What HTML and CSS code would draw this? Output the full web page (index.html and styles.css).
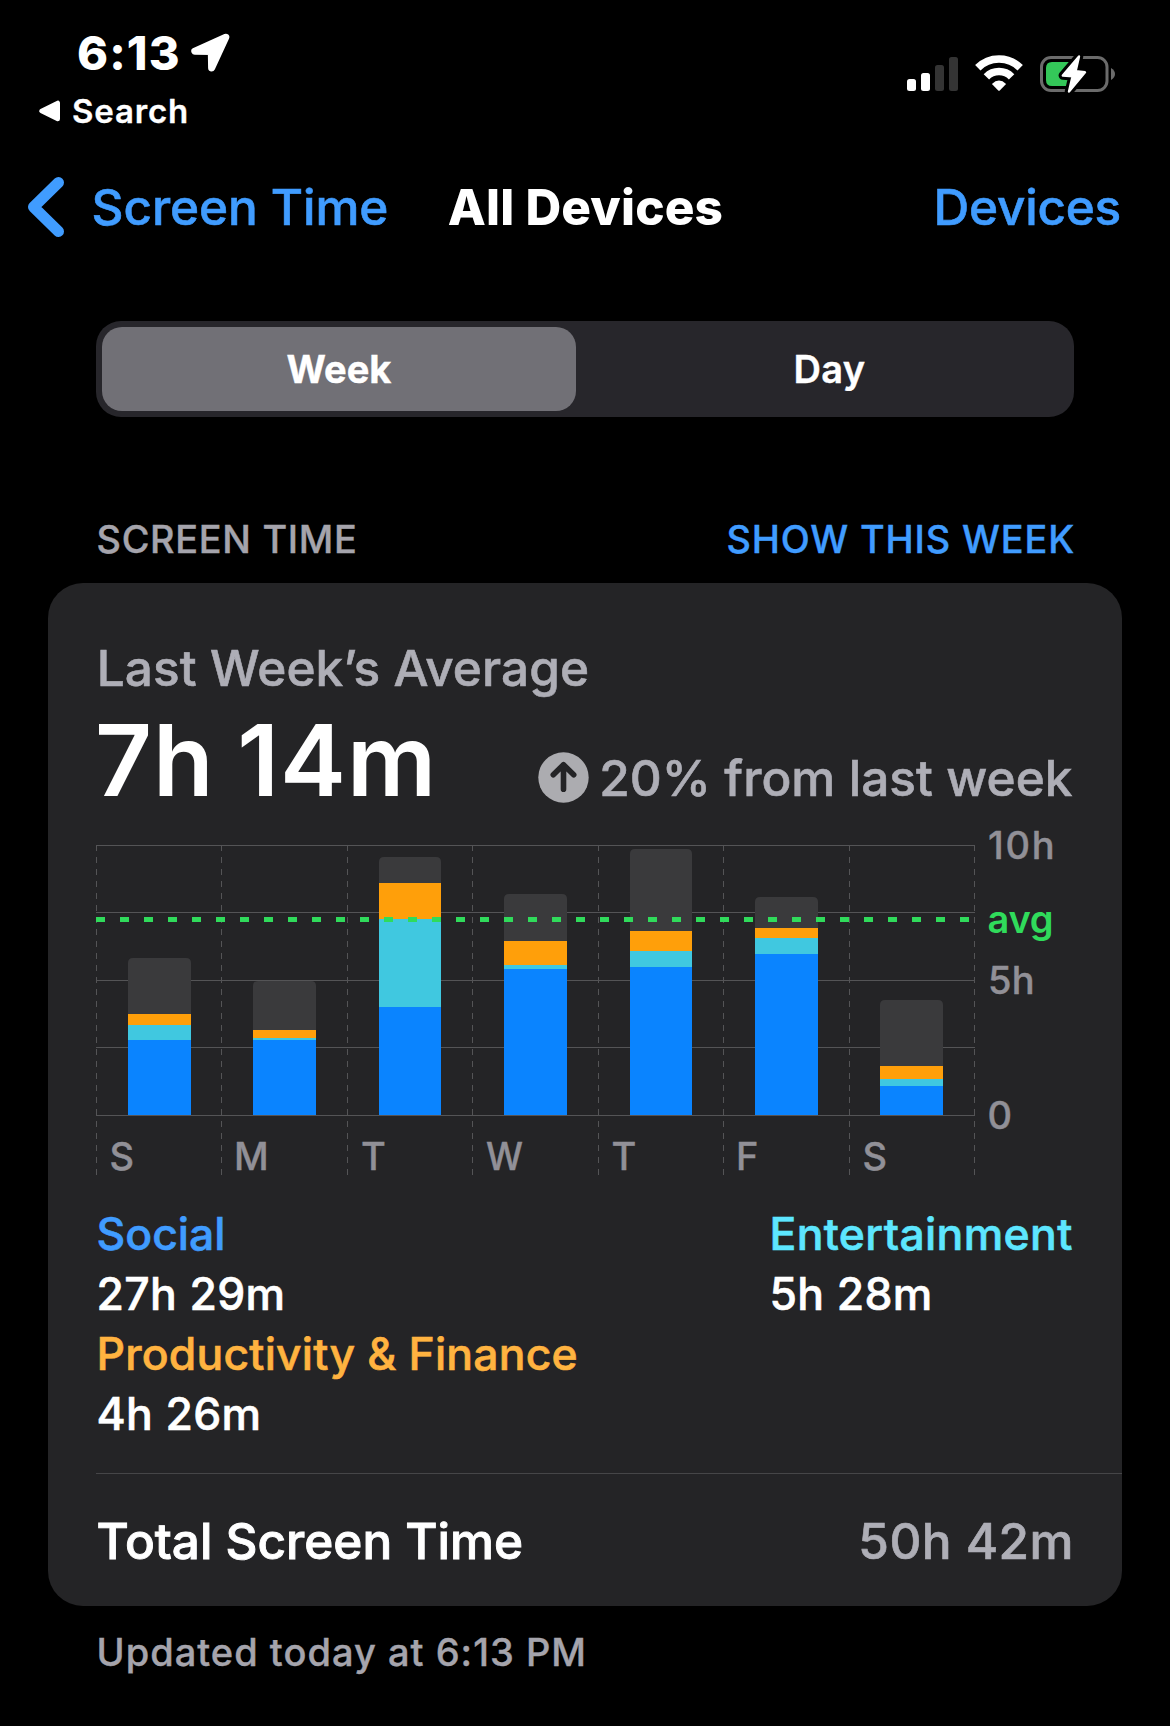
FILE: index.html
```html
<!DOCTYPE html>
<html lang="en">
<head>
<meta charset="utf-8">
<title>Screen Time</title>
<link rel="stylesheet" href="styles.css">
</head>
<body>
<header class="status">
  <div class="status-left">
    <div class="clock">
      <span class="clock-time">6:13</span>
      <svg width="43" height="43" viewBox="190 31 43 43"><path d="M226.8 37.3 195.8 51.2 212.3 51.5 212.6 68Z" fill="#fff" stroke="#fff" stroke-width="7" stroke-linejoin="round"/></svg>
    </div>
    <a class="back-app">
      <svg width="25" height="26" viewBox="37 98.500 25 26"><path d="M41.500 111.500 57.700 103.500V119.500Z" fill="#fff" stroke="#fff" stroke-width="4.600" stroke-linejoin="round"/></svg>
      <span>Search</span>
    </a>
  </div>
  <svg class="status-icons" width="210" height="42" viewBox="906 53 210 42">
    <g fill="#fff">
      <rect x="907" y="79" width="9" height="12" rx="2.500"/>
      <rect x="921" y="73" width="9" height="18" rx="2.500"/>
      <rect x="935" y="65" width="9" height="26" rx="2.500" fill="#343434"/>
      <rect x="949" y="57" width="9" height="34" rx="2.500" fill="#343434"/>
      <path d="M991.900 83.900Q999 77.300 1006.100 83.900L1000 90.300Q999 91.300 998 90.300Z"/>
    </g>
    <g fill="none" stroke="#fff">
      <path d="M977.800 67.800A30 30 0 0 1 1020.200 67.800" stroke-width="7.600"/>
      <path d="M986.400 76.800A17.700 17.700 0 0 1 1011.600 76.800" stroke-width="7.600"/>
    </g>
    <rect x="1041.500" y="57.500" width="65.500" height="33" rx="9.500" fill="none" stroke="#6b6b6b" stroke-width="3"/>
    <path d="M1052 62H1074V86H1052Q1046 86 1046 80V68Q1046 62 1052 62Z" fill="#34c759"/>
    <path d="M1111 68Q1115 70.500 1115 74T1111 80Z" fill="#6b6b6b"/>
    <path d="M1079 56.500 1062.800 75.500 1072.600 76.200 1069 91.500 1085 72.300 1075.600 71.200Z" fill="#fff" stroke="#000" stroke-width="8.500" stroke-linejoin="round"/>
    <path d="M1079 56.500 1062.800 75.500 1072.600 76.200 1069 91.500 1085 72.300 1075.600 71.200Z" fill="#fff" stroke="#fff" stroke-width="2.400" stroke-linejoin="round"/>
  </svg>
</header>

<nav class="nav">
  <a class="nav-back">
    <svg width="42" height="64" viewBox="26 175 42 64"><path d="M58.500 182.500 33.500 207 58.500 231.500" fill="none" stroke="#409cff" stroke-width="11" stroke-linecap="round" stroke-linejoin="round"/></svg>
    <span>Screen Time</span>
  </a>
  <h1 class="nav-title">All Devices</h1>
  <a class="nav-action">Devices</a>
</nav>

<main class="content">
  <div class="segmented">
    <button class="segment segment-on">Week</button>
    <button class="segment">Day</button>
  </div>

  <div class="section-head">
    <h2 class="section-title">SCREEN TIME</h2>
    <a class="section-link">SHOW THIS WEEK</a>
  </div>

  <section class="card">
    <div class="card-body">
      <div class="avg-label">Last Week’s Average</div>
      <div class="avg-row">
        <div class="avg-value">7h 14m</div>
        <div class="trend">
          <svg class="trend-icon" width="51" height="51" viewBox="0 0 51 51"><circle cx="25.500" cy="25.500" r="25.200" fill="#acacb0"/><path d="M25.500 12.800V37.300M15.300 22.700 25.500 12.800 35.700 22.700" fill="none" stroke="#242426" stroke-width="5.600" stroke-linecap="round" stroke-linejoin="round"/></svg>
          <span>20% from last week</span>
        </div>
      </div>

      <svg class="chart" width="978" height="381" viewBox="96 804 978 381">
        <g class="grid">
          <path d="M96 845.500H975M96 912.500H975M96 980.500H975M96 1047.500H975M96 1115.500H975"/>
          <path class="grid-days" d="M96.500 845V1175M221.500 845V1175M347.500 845V1175M472.500 845V1175M598.500 845V1175M723.500 845V1175M849.500 845V1175M974.500 845V1175"/>
        </g>
        <g class="other">
          <path d="M128 1115V963q0-5 5-5h53q5 0 5 5V1115Z"/>
          <path d="M253 1115V986q0-5 5-5h53q5 0 5 5V1115Z"/>
          <path d="M379 1115V862q0-5 5-5h52q5 0 5 5V1115Z"/>
          <path d="M504 1115V899q0-5 5-5h53q5 0 5 5V1115Z"/>
          <path d="M630 1115V854q0-5 5-5h52q5 0 5 5V1115Z"/>
          <path d="M755 1115V902q0-5 5-5h53q5 0 5 5V1115Z"/>
          <path d="M880 1115V1005q0-5 5-5h53q5 0 5 5V1115Z"/>
        </g>
        <g class="productivity">
          <rect x="128" y="1014" width="63" height="11"/>
          <rect x="253" y="1030" width="63" height="8"/>
          <rect x="379" y="883" width="62" height="36"/>
          <rect x="504" y="941" width="63" height="24"/>
          <rect x="630" y="931" width="62" height="20"/>
          <rect x="755" y="928" width="63" height="10"/>
          <rect x="880" y="1066" width="63" height="13"/>
        </g>
        <g class="entertainment">
          <rect x="128" y="1025" width="63" height="15"/>
          <rect x="253" y="1038" width="63" height="2"/>
          <rect x="379" y="919" width="62" height="88"/>
          <rect x="504" y="965" width="63" height="4"/>
          <rect x="630" y="951" width="62" height="16"/>
          <rect x="755" y="938" width="63" height="16"/>
          <rect x="880" y="1079" width="63" height="7"/>
        </g>
        <g class="social">
          <rect x="128" y="1040" width="63" height="75"/>
          <rect x="253" y="1040" width="63" height="75"/>
          <rect x="379" y="1007" width="62" height="108"/>
          <rect x="504" y="969" width="63" height="146"/>
          <rect x="630" y="967" width="62" height="148"/>
          <rect x="755" y="954" width="63" height="161"/>
          <rect x="880" y="1086" width="63" height="29"/>
        </g>
        <path class="avg-line" d="M96 919.500H975"/>
        <g class="axis">
          <text x="109.500" y="1170">S</text>
          <text x="234" y="1170">M</text>
          <text x="361" y="1170">T</text>
          <text x="486" y="1170" textLength="37" lengthAdjust="spacingAndGlyphs">W</text>
          <text x="611.500" y="1170">T</text>
          <text x="736" y="1170">F</text>
          <text x="862.500" y="1170">S</text>
          <text x="988" y="859" letter-spacing="1.700">10h</text>
          <text x="988" y="994" letter-spacing=".3">5h</text>
          <text x="987.500" y="1129">0</text>
          <text class="axis-avg" x="987.500" y="933">avg</text>
        </g>
      </svg>

      <dl class="legend">
        <div class="legend-item">
          <dt class="name-social">Social</dt>
          <dd>27h 29m</dd>
        </div>
        <div class="legend-item">
          <dt class="name-entertainment">Entertainment</dt>
          <dd>5h 28m</dd>
        </div>
        <div class="legend-item">
          <dt class="name-productivity">Productivity &amp; Finance</dt>
          <dd>4h 26m</dd>
        </div>
      </dl>
    </div>
    <div class="total">
      <span class="total-label">Total Screen Time</span>
      <span class="total-value">50h 42m</span>
    </div>
  </section>

  <p class="updated">Updated today at 6:13 PM</p>
</main>
</body>
</html>
```
FILE: styles.css
```css
* { box-sizing: border-box; margin: 0; padding: 0; }

/* A hairline stroke puts regular text halfway between medium and semibold. */
body {
  width: 1170px;
  min-height: 1726px;
  background: #000;
  color: #fff;
  font-family: Inter, "Liberation Sans", sans-serif;
  font-weight: 500;
  -webkit-text-stroke: .6px currentColor;
}

svg { display: block; flex: none; }

/* Status bar */
.status {
  display: flex;
  justify-content: space-between;
  height: 140px;
  padding: 24px 54px 0 37px;
}
.clock {
  display: flex;
  align-items: center;
  gap: 8px;
  height: 57px;
  padding-left: 40px;
}
.clock-time { font-size: 47px; font-weight: 800; letter-spacing: 1.1px; line-height: 56px; -webkit-text-stroke: 0; }
.back-app {
  display: flex;
  align-items: center;
  gap: 10px;
  margin-top: 10px;
  font-size: 33px;
  font-weight: 600;
  letter-spacing: .85px;
  line-height: 40px;
  -webkit-text-stroke-width: .3px;
}
.status-icons { margin-top: 29px; }

/* Navigation bar */
.nav {
  display: grid;
  grid-template-columns: 1fr auto 1fr;
  align-items: center;
  height: 134px;
  font-size: 49.5px;
  line-height: 60px;
}
.nav-back {
  display: flex;
  align-items: center;
  gap: 23.5px;
  padding-left: 26px;
  color: #409cff;
  letter-spacing: -.08px;
}
.nav-title { padding-left: 1px; font-size: 49.5px; font-weight: 800; letter-spacing: .15px; -webkit-text-stroke: 0; }
.nav-action { padding-right: 49px; color: #409cff; letter-spacing: -.24px; text-align: right; }

/* Week / Day switch */
.content { padding: 47px 48px 0; }
.segmented {
  display: flex;
  gap: 15px;
  height: 96px;
  margin: 0 48px;
  padding: 6px;
  border-radius: 25px;
  background: #27262b;
}
.segment {
  flex: 1;
  border: 0;
  background: none;
  color: #fff;
  font: 600 38px/84px Inter, "Liberation Sans", sans-serif;
  letter-spacing: .4px;
  -webkit-text-stroke: .4px currentColor;
}
.segment-on { flex: 0 0 474px; border-radius: 20px; background: #717076; font-weight: 700; letter-spacing: 0; }

/* Section header */
.section-head {
  display: flex;
  justify-content: space-between;
  height: 166px;
  padding: 98px 47px 0 48.5px;
  font-size: 37.8px;
  line-height: 49px;
  -webkit-text-stroke-width: .4px;
}
.section-title { color: #a5a4ac; font-size: inherit; font-weight: inherit; letter-spacing: .72px; }
.section-link { color: #409cff; letter-spacing: .88px; }

/* Usage card */
.card { height: 1023px; border-radius: 35px; background: #242426; }
.card-body { padding: 57px 48px 29px; }
.avg-label { padding-left: .8px; color: #aeaeb6; font-size: 49.5px; letter-spacing: .08px; line-height: 56px; }
.avg-row { display: flex; justify-content: space-between; align-items: flex-end; height: 128px; }
.avg-value {
  margin-left: -1px;
  font-size: 99px;
  font-weight: 600;
  letter-spacing: .9px;
  line-height: 128px;
  word-spacing: -3px;
  -webkit-text-stroke: 0;
}
.trend {
  display: flex;
  align-items: center;
  gap: 10px;
  margin-bottom: 18px;
  padding-right: 1.5px;
  color: #aeaeb6;
  font-size: 49.5px;
  letter-spacing: .06px;
  line-height: 56px;
}
.trend-icon { margin-bottom: 2px; }

/* Weekly chart */
.chart { margin-top: -20px; }
.grid { fill: none; stroke: #545456; stroke-width: 1; }
.grid-days { stroke-dasharray: 6 6; }
.other { fill: #3a3a3c; }
.productivity { fill: #ff9f0a; }
.entertainment { fill: #40c8e0; }
.social { fill: #0a84ff; }
.avg-line { stroke: #30db5b; stroke-width: 5; stroke-dasharray: 9 15; }
.axis { fill: #919097; stroke: #919097; stroke-width: .4; font-size: 38px; -webkit-text-stroke: 0; }
.axis-avg { fill: #30db5b; stroke: none; font-weight: 600; letter-spacing: -.3px; }

/* Category totals */
.legend {
  display: grid;
  grid-template-columns: 673px 1fr;
  margin-top: 19px;
  font-size: 44.5px;
  line-height: 60px;
  white-space: nowrap;
}
.legend-item { padding-left: .5px; }
.legend dd { letter-spacing: .35px; }
.name-social { color: #409cff; letter-spacing: 0; }
.name-entertainment { color: #5de6ff; letter-spacing: .35px; }
.name-productivity { color: #ffb340; letter-spacing: .18px; }

.total {
  display: flex;
  justify-content: space-between;
  margin-left: 48px;
  padding: 3px 48px 0 0;
  border-top: 1px solid #464648;
  font-size: 49.5px;
  line-height: 128px;
}
.total-label { padding-left: .5px; letter-spacing: -.02px; -webkit-text-stroke-width: .9px; }
.total-value { color: #aeaeb6; letter-spacing: .45px; }

.updated {
  padding: 22px 48.5px 0;
  color: #a5a4ac;
  font-size: 38px;
  letter-spacing: 1.02px;
  line-height: 48px;
  -webkit-text-stroke-width: .4px;
}
```
